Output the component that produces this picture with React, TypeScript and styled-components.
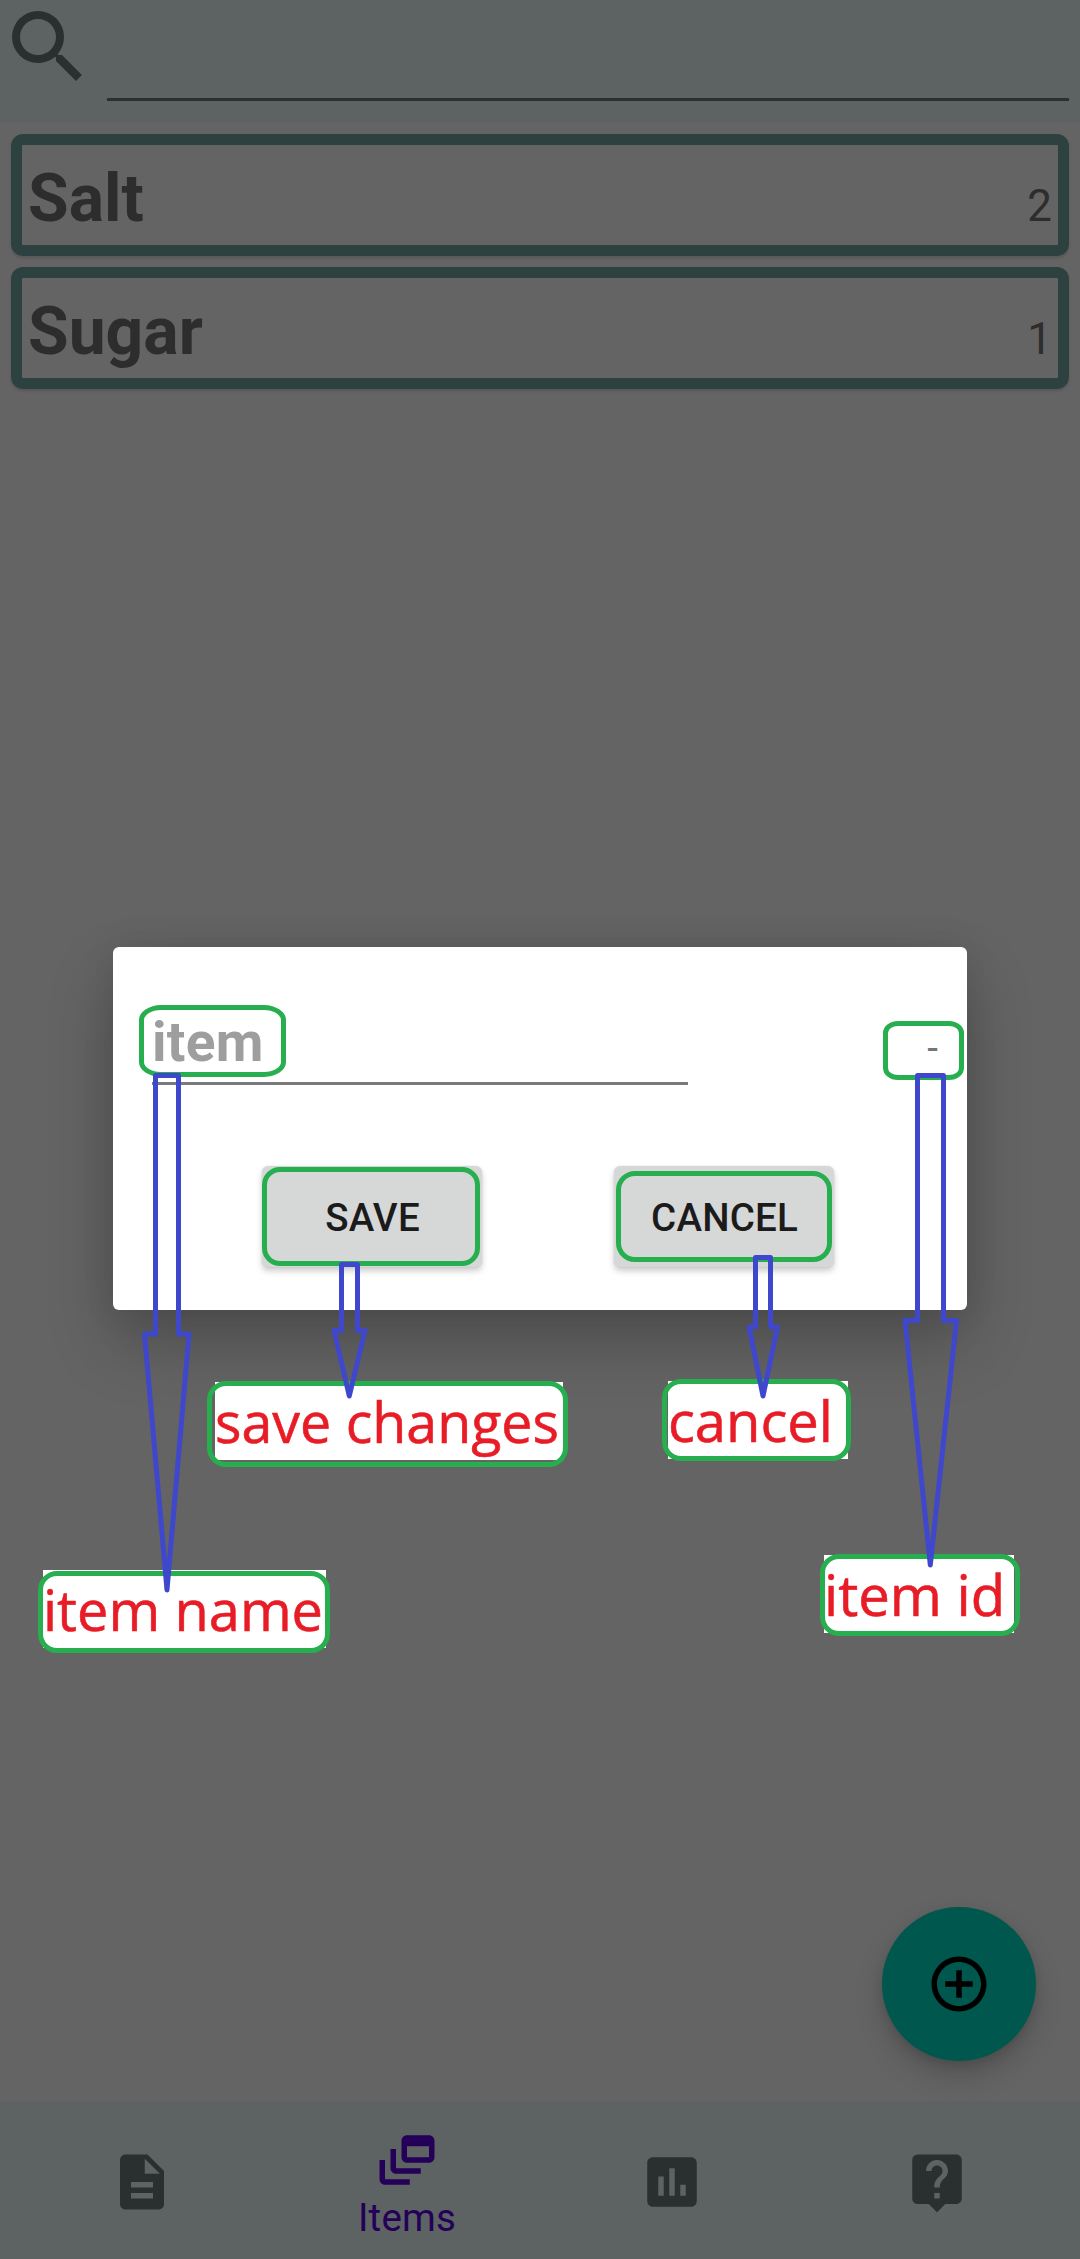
import React from "react";
import styled, { createGlobalStyle, css } from "styled-components";
import {
  MdAddCircleOutline,
  MdDescription,
  MdDynamicFeed,
  MdInsertChart,
  MdLiveHelp,
  MdSearch,
} from "react-icons/md";

const color = {
  page: "#646464",
  bar: "#5d6363",
  ink: "#2d2d2d",
  barInk: "#2a2f2f",
  cardBorder: "#2d4140",
  active: "#240058",
  fab: "#00574d",
  green: "#27ae4f",
  blue: "#3f48cc",
  red: "#e81c26",
};

const GlobalStyle = createGlobalStyle`
  *, *::before, *::after { box-sizing: border-box; }
  body { margin: 0; background: ${color.page}; }
`;

const Screen = styled.div`
  position: relative;
  display: flex;
  flex-direction: column;
  width: 1080px;
  height: 2259px;
  overflow: hidden;
  background: ${color.page};
  color: ${color.ink};
  font-family: Roboto, "Liberation Sans", sans-serif;
`;

const SearchBar = styled.header`
  display: flex;
  height: 123px;
  padding-right: 11px;
  gap: 11px;
  background: ${color.bar};
`;

const SearchIcon = styled(MdSearch)`
  flex: none;
  width: 96px;
  height: 96px;
  margin-top: -1px;
  color: ${color.barInk};
`;

const SearchField = styled.input`
  flex: 1;
  min-width: 0;
  height: 101px;
  padding: 0;
  border: 0;
  border-bottom: 3px solid ${color.barInk};
  border-radius: 0;
  outline: 0;
  background: transparent;
  font: 50px Roboto, sans-serif;
`;

const ItemList = styled.main`
  display: flex;
  flex: 1;
  flex-direction: column;
  gap: 11px;
  padding: 11px;
`;

const ItemCard = styled.article`
  display: flex;
  align-items: baseline;
  justify-content: space-between;
  height: 122px;
  padding: 15px 6px 0;
  border: 11px solid ${color.cardBorder};
  border-radius: 12px;
  box-shadow: 0 2px 3px rgba(0, 0, 0, 0.13);
`;

const ItemName = styled.h2`
  margin: 0;
  font-size: 66px;
  line-height: 77px;
  font-weight: 700;
`;

const ItemCount = styled.span`
  font-size: 44px;
`;

const BottomNav = styled.nav`
  display: grid;
  grid-template-columns: repeat(4, 265px);
  justify-content: center;
  height: 155px;
  padding-right: 2px;
  background: ${color.bar};
  box-shadow: 0 -1px 4px rgba(0, 0, 0, 0.06);
`;

const NavItem = styled.a<{ $active?: boolean }>`
  display: flex;
  flex-direction: column;
  align-items: center;
  padding-top: ${(p) => (p.$active ? 23 : 45)}px;
  color: ${(p) => (p.$active ? color.active : color.barInk)};
  font-size: 38.5px;
  line-height: 45px;

  svg {
    width: 66px;
    height: 66px;
  }
`;

const NavLabel = styled.span`
  margin-top: 2px;
  padding-left: 1px;
  letter-spacing: 0.2px;
`;

const AddButton = styled.button`
  position: absolute;
  left: 882px;
  top: 1907px;
  display: grid;
  place-items: center;
  width: 154px;
  height: 154px;
  padding: 0;
  border: 0;
  border-radius: 50%;
  background: ${color.fab};
  color: #000;
  box-shadow: 0 14px 28px rgba(0, 0, 0, 0.18), 0 4px 10px rgba(0, 0, 0, 0.1);

  svg {
    width: 66px;
    height: 66px;
  }
`;

const Dialog = styled.section`
  position: absolute;
  left: 113px;
  top: 947px;
  display: flex;
  flex-direction: column;
  width: 854px;
  height: 363px;
  border-radius: 6px;
  background: #fff;
  box-shadow: 0 32px 66px rgba(0, 0, 0, 0.24), 0 0 34px rgba(0, 0, 0, 0.08);
`;

const DialogFields = styled.div`
  display: flex;
  align-items: baseline;
  justify-content: space-between;
  height: 138px;
  padding: 63px 29px 0 39px;
`;

const NameField = styled.div`
  width: 536px;
  height: 75px;
  border-bottom: 3px solid #7b7a7b;
  color: #9e9e9e;
  font-size: 55px;
  font-weight: 700;
  letter-spacing: 0.3px;
  line-height: 64px;
`;

const IdField = styled.span`
  color: #757575;
  font-size: 38.5px;
`;

const DialogActions = styled.div`
  display: flex;
  justify-content: space-between;
  padding: 81px 133px 0 149px;
`;

const ActionButton = styled.button`
  width: 220px;
  height: 101px;
  padding: 2px 0 0 1px;
  border: 0;
  border-radius: 6px;
  background: #d6d8d7;
  color: #1b1b1b;
  font: 500 38.5px Roboto, sans-serif;
  letter-spacing: 0.2px;
  text-transform: uppercase;
  box-shadow: 0 4px 6px rgba(0, 0, 0, 0.2), 0 0 2px rgba(0, 0, 0, 0.1);
`;

type Box = { x: number; y: number; w: number; h: number };

const place = css<{ $box: Box }>`
  position: absolute;
  left: ${(p) => p.$box.x}px;
  top: ${(p) => p.$box.y}px;
  width: ${(p) => p.$box.w}px;
  height: ${(p) => p.$box.h}px;
`;

const Frame = styled.div<{ $box: Box; $radius: string }>`
  ${place}
  border: 5px solid ${color.green};
  border-radius: ${(p) => p.$radius};
  pointer-events: none;
`;

const Paper = styled.div<{ $box: Box }>`
  ${place}
  background: #fff;
`;

const Note = styled.span<{ $x: number; $baseline: number; $squeeze: number }>`
  position: absolute;
  left: ${(p) => p.$x}px;
  top: ${(p) => p.$baseline - 61}px;
  color: ${color.red};
  font: 400 57px/78px "Open Sans", sans-serif;
  -webkit-text-stroke: 0.6px ${color.red};
  white-space: nowrap;
  transform: scaleX(${(p) => p.$squeeze});
  transform-origin: 0 0;
`;

const Arrows = styled.svg`
  position: absolute;
  inset: 0;
  pointer-events: none;
`;

const items = [
  { name: "Salt", count: 2 },
  { name: "Sugar", count: 1 },
];

const highlights: { box: Box; radius: string }[] = [
  { box: { x: 139, y: 1005, w: 147, h: 72 }, radius: "22px / 15px" },
  { box: { x: 883, y: 1021, w: 81, h: 59 }, radius: "15px / 12px" },
  { box: { x: 262, y: 1167, w: 218, h: 99 }, radius: "18px" },
  { box: { x: 616, y: 1171, w: 216, h: 91 }, radius: "19px" },
];

const notes = [
  {
    text: "save changes",
    paper: { x: 215, y: 1382, w: 348, h: 78 },
    frame: { x: 207, y: 1381, w: 361, h: 86 },
    x: 215, baseline: 1443, squeeze: 0.974,
  },
  {
    text: "cancel",
    paper: { x: 668, y: 1381, w: 180, h: 78 },
    frame: { x: 662, y: 1379, w: 189, h: 82 },
    x: 668, baseline: 1442, squeeze: 0.984,
  },
  {
    text: "item name",
    paper: { x: 43, y: 1570, w: 283, h: 78 },
    frame: { x: 38, y: 1571, w: 292, h: 82 },
    x: 43, baseline: 1631, squeeze: 0.98,
  },
  {
    text: "item id",
    paper: { x: 824, y: 1555, w: 190, h: 78 },
    frame: { x: 820, y: 1554, w: 200, h: 82 },
    x: 824, baseline: 1616, squeeze: 0.987,
  },
];

const arrows = [
  "155.5,1075.5 178.5,1075.5 178.5,1334 189,1334 167,1590 144.5,1334 155.5,1334",
  "341.5,1264.5 357.5,1264.5 357.5,1330.5 365,1330.5 349.3,1396 334,1330.5 341.5,1330.5",
  "755.5,1257.5 770.5,1257.5 770.5,1327 777.5,1327 763,1396 749,1327 755.5,1327",
  "917.5,1075.5 943.5,1075.5 943.5,1320.5 956.5,1320.5 930.3,1565 905,1320.5 917.5,1320.5",
];

export default function App() {
  return (
    <>
      <GlobalStyle />
      <Screen>
        <SearchBar>
          <SearchIcon />
          <SearchField aria-label="Search" />
        </SearchBar>
        <ItemList>
          {items.map((item) => (
            <ItemCard key={item.name}>
              <ItemName>{item.name}</ItemName>
              <ItemCount>{item.count}</ItemCount>
            </ItemCard>
          ))}
        </ItemList>
        <BottomNav>
          <NavItem><MdDescription /></NavItem>
          <NavItem $active>
            <MdDynamicFeed />
            <NavLabel>Items</NavLabel>
          </NavItem>
          <NavItem><MdInsertChart /></NavItem>
          <NavItem><MdLiveHelp /></NavItem>
        </BottomNav>
        <AddButton aria-label="Add"><MdAddCircleOutline /></AddButton>

        <Dialog>
          <DialogFields>
            <NameField>item</NameField>
            <IdField>-</IdField>
          </DialogFields>
          <DialogActions>
            <ActionButton>Save</ActionButton>
            <ActionButton>Cancel</ActionButton>
          </DialogActions>
        </Dialog>

        {highlights.map((h) => (
          <Frame key={h.box.x} $box={h.box} $radius={h.radius} />
        ))}
        {notes.map((n) => (
          <React.Fragment key={n.text}>
            <Paper $box={n.paper} />
            <Frame $box={n.frame} $radius="19px" />
            <Note $x={n.x} $baseline={n.baseline} $squeeze={n.squeeze}>{n.text}</Note>
          </React.Fragment>
        ))}
        <Arrows width="1080" height="2259" viewBox="0 0 1080 2259">
          {arrows.map((points) => (
            <polygon
              key={points}
              points={points}
              fill="none"
              stroke={color.blue}
              strokeWidth="5"
              strokeLinejoin="round"
            />
          ))}
        </Arrows>
      </Screen>
    </>
  );
}
